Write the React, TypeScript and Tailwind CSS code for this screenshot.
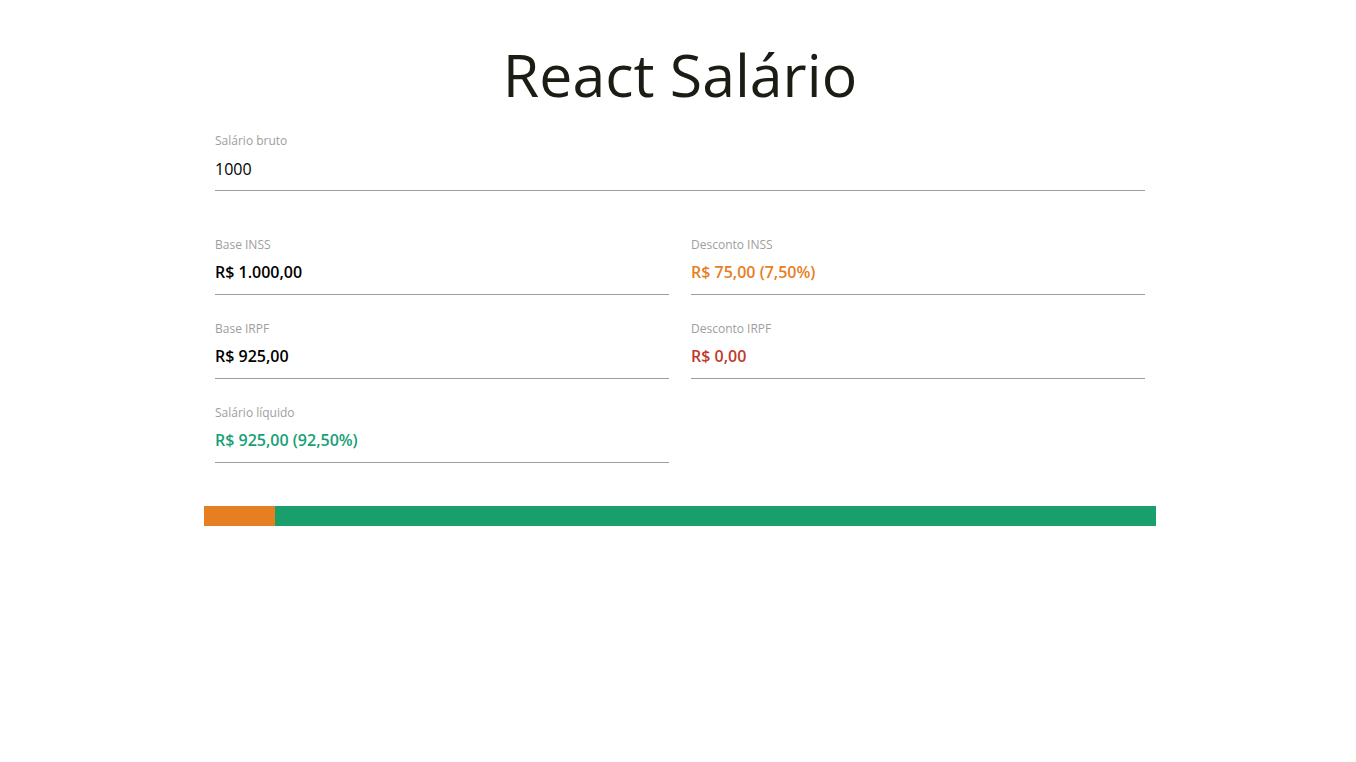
import React from "react";

const fmt = (n: number) =>
  "R$ " + n.toLocaleString("pt-BR", { minimumFractionDigits: 2, maximumFractionDigits: 2 });

function Field({ label, value, color }: { label: string; value: string; color?: string }) {
  return (
    <div className="flex flex-col px-[11px]">
      <span className="text-[12px] leading-[16px] text-[#9e9e9e]">{label}</span>
      <div className={`h-[42px] pb-[4px] flex items-center text-[16px] font-semibold border-b border-[#9e9e9e] ${color ?? "text-black"}`}>
        {value}
      </div>
    </div>
  );
}

export default function App() {
  const bruto = 1000;
  const inss = 75;
  const liquido = 925;
  const inssPct = (inss / bruto) * 100;

  return (
    <div className="min-h-[762px] bg-white text-[#222]" style={{ fontFamily: "'Open Sans', 'Noto Sans', sans-serif" }}>
      <div className="w-[956px] mx-auto pl-[4px] pt-[36px]">
        <h1 className="text-center text-[59px] leading-[76px] font-normal text-[#1c1c14]">React Salário</h1>

        <div className="mt-[21px] flex flex-col px-[11px]">
          <span className="text-[12px] leading-[16px] text-[#9e9e9e]">Salário bruto</span>
          <div className="h-[42px] pb-[2px] flex items-center text-[16px] text-black border-b border-[#9e9e9e]">1000</div>
        </div>

        <div className="mt-[46px] grid grid-cols-2 gap-y-[26px]">
          <Field label="Base INSS" value={fmt(1000)} />
          <Field label="Desconto INSS" value={`${fmt(inss)} (7,50%)`} color="text-[#e67e22]" />
          <Field label="Base IRPF" value={fmt(925)} />
          <Field label="Desconto IRPF" value={fmt(0)} color="text-[#c0392b]" />
          <Field label="Salário líquido" value={`${fmt(liquido)} (92,50%)`} color="text-[#17a077]" />
        </div>

        <div className="mt-[43px] flex h-[20px]">
          <div className="bg-[#e67e22]" style={{ width: `${inssPct}%` }} />
          <div className="bg-[#199f6c] flex-1" />
        </div>
      </div>
    </div>
  );
}
